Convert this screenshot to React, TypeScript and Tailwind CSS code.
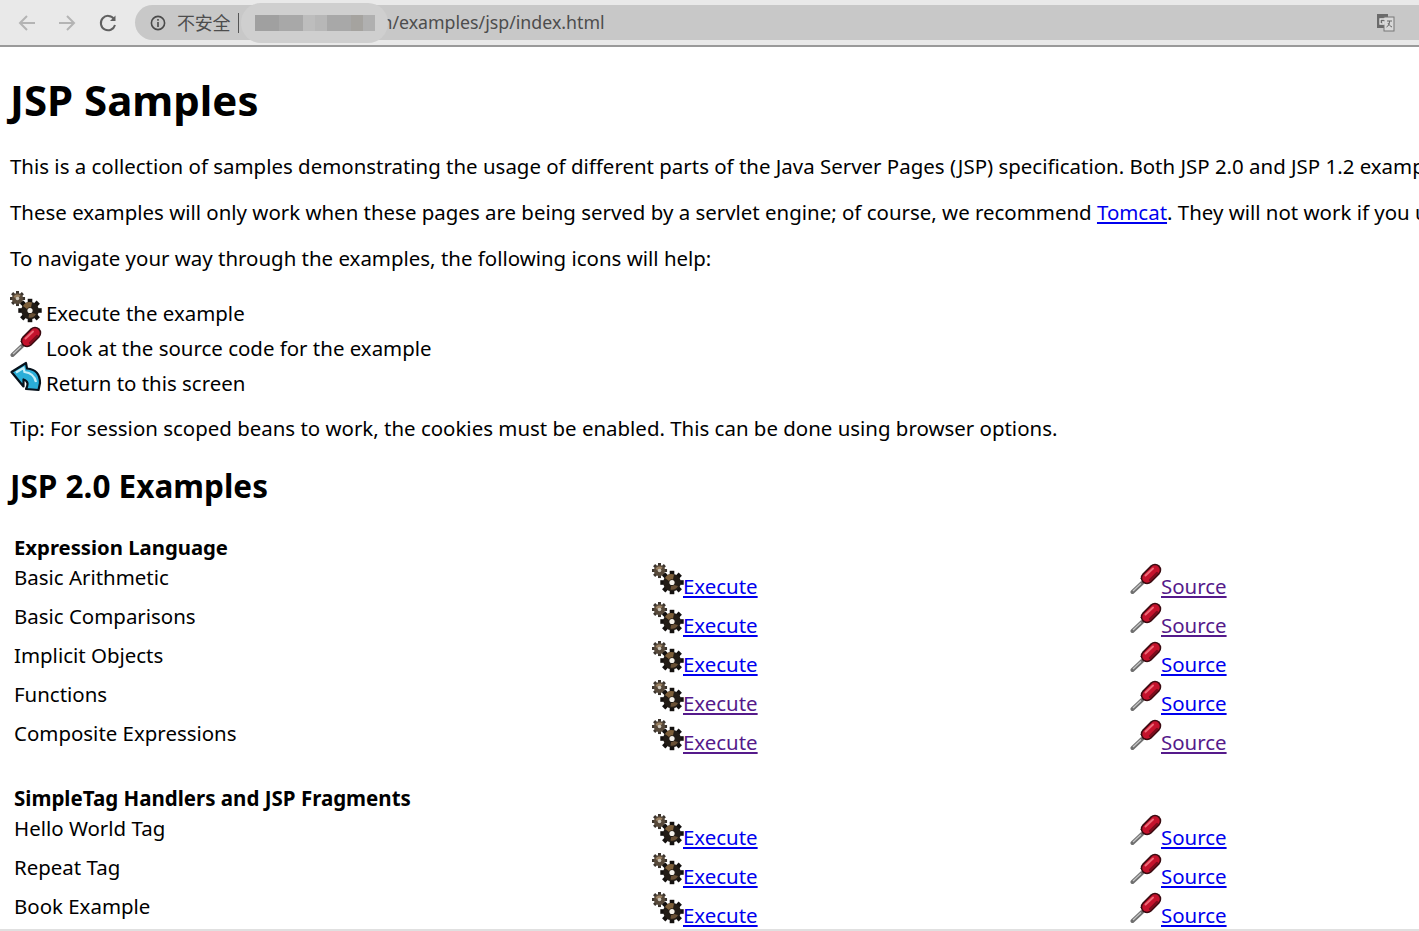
import React from "react";

const ff = { fontFamily: '"Noto Sans","Noto Sans CJK SC",sans-serif' };

function Gears({ className = "mr-[-1px]" }: { className?: string }) {
  const teeth = (cx: number, cy: number, r: number, n: number, c: string) =>
    Array.from({ length: n }).map((_, i) => {
      const a = (i * 360) / n;
      return <rect key={i} x={cx - r * 0.24} y={cy - r * 1.22} width={r * 0.48} height={r * 0.5} fill={c} transform={`rotate(${a} ${cx} ${cy})`} />;
    });
  return (
    <svg viewBox="0 0 32 32" className={`w-[32px] h-[32px] shrink-0 ${className}`}>
      {teeth(7.5, 7.5, 6.2, 8, "#3a332c")}
      <circle cx="7.5" cy="7.5" r="5.6" fill="#57493a" />
      <path d="M3.5 6a4.5 4.5 0 0 1 7-1.5l-2 2.5h-3z" fill="#9a8162" />
      <circle cx="7.5" cy="7.5" r="1.8" fill="#cfc8bb" />
      {teeth(20, 19.5, 9.6, 8, "#14110f")}
      <circle cx="20" cy="19.5" r="8.8" fill="#221c16" />
      <path d="M13 15a8 8 0 0 1 9-3.6l-1 5a3.4 3.4 0 0 0-4 1.5z" fill="#7d5f3a" />
      <path d="M26 23a7 7 0 0 1-7.5 3.6l.6-3.6a3.4 3.4 0 0 0 3-1z" fill="#6a5136" />
      <circle cx="20" cy="19.5" r="2.6" fill="#f5f2ec" />
    </svg>
  );
}

function Driver({ className = "mr-[-1px]" }: { className?: string }) {
  return (
    <svg viewBox="0 0 32 32" className={`w-[32px] h-[32px] shrink-0 ${className}`}>
      <path d="M2.5 29 L12 20" stroke="#6f6f6f" strokeWidth="4" strokeLinecap="round" />
      <path d="M3 28 L11 20.5" stroke="#c6c6c6" strokeWidth="1.2" />
      <path d="M11 15.5 L16 21 L19 18 L14 12.5 z" fill="#2a0c10" stroke="#2a0c10" />
      <path d="M17 15 L25 7" stroke="#3a0a10" strokeWidth="12.5" strokeLinecap="round" />
      <path d="M17 15 L25 7" stroke="#c4122c" strokeWidth="9.5" strokeLinecap="round" />
      <path d="M15.5 12.5 L23 5.5" stroke="#ee6a78" strokeWidth="2" strokeLinecap="round" />
      <path d="M20 17 L27 10" stroke="#7c0c1c" strokeWidth="2.4" strokeLinecap="round" />
    </svg>
  );
}

function Back({ className = "" }: { className?: string }) {
  return (
    <svg viewBox="0 0 32 32" className={`w-[32px] h-[32px] shrink-0 ${className}`}>
      <path d="M1.5 11 L16 2 L17 7.5 Q30 8.5 30 22 L28.5 29 L16 28 Q20 20.5 13.5 18.5 L13.5 25.5 z" fill="#2aaed8" stroke="#07121c" strokeWidth="2.2" strokeLinejoin="round" />
      <path d="M6 11.5 L13.5 7 L14.5 11 Q24 12 26 21" fill="none" stroke="#c4eef8" strokeWidth="2.2" />
    </svg>
  );
}

const BLUE = "text-[#0000ee]";
const PURPLE = "text-[#551a8b]";

function Row({ name, ex, src }: { name: string; ex: string; src: string }) {
  return (
    <div className="flex h-[39px] items-start">
      <div className="w-[642px] pl-[4px] text-black leading-[29px]">{name}</div>
      <div className="w-[478px] flex items-start">
        <Gears />
        <a href="#" className={`underline leading-[29px] mt-[9px] ${ex}`}>Execute</a>
      </div>
      <div className="flex items-start">
        <Driver />
        <a href="#" className={`underline leading-[29px] mt-[9px] ${src}`}>Source</a>
      </div>
    </div>
  );
}

export default function App() {
  return (
    <div className="w-[1419px] h-[931px] overflow-hidden bg-white relative flex flex-col text-[20.45px] text-black" style={ff}>
      <header className="h-[47px] shrink-0 bg-[#e9e9e9] border-b-[2px] border-[#9a9a9a] flex items-start pt-[5px] pl-[17px]">
        <svg viewBox="0 0 20 20" className="w-[20px] h-[20px] mt-[8px] text-[#b4b4b4]" fill="none" stroke="currentColor" strokeWidth="2"><path d="M18 10H3M10 3l-7 7 7 7" /></svg>
        <svg viewBox="0 0 20 20" className="w-[20px] h-[20px] mt-[8px] ml-[20px] text-[#b4b4b4]" fill="none" stroke="currentColor" strokeWidth="2"><path d="M2 10h15M10 3l7 7-7 7" /></svg>
        <svg viewBox="0 0 20 20" className="w-[20px] h-[20px] mt-[8px] ml-[21px] text-[#606060]" fill="none" stroke="currentColor" strokeWidth="2"><path d="M16 6a7.2 7.2 0 1 0 1 6" /><path d="M17.5 2.5v5.5h-5.5z" fill="currentColor" stroke="none" /></svg>
        <div className="ml-[17px] h-[35px] flex-1 mr-[-20px] rounded-l-[18px] bg-[#c8c8c8] flex items-center relative text-[17.75px] text-[#4d4d4d] pl-[15px]">
          <svg viewBox="0 0 16 16" className="w-[16px] h-[16px] shrink-0" fill="none" stroke="#4a4a4a" strokeWidth="1.6"><circle cx="8" cy="8" r="6.6" /><path d="M8 7v5M8 4v1.8" /></svg>
          <span className="ml-[11px] text-[18px] tracking-[-0.2px] leading-none">不安全</span>
          <span className="ml-[8px] w-[1px] h-[20px] bg-[#555]" />
          <span className="ml-[142px]">n/examples/jsp/index.html</span>
          <div className="absolute left-[106px] top-[-2px] w-[147px] h-[40px] rounded-[20px] bg-[#cfcfcf] flex items-center pl-[14px]">
            <div className="w-[24px] h-[16px] bg-[#a0a0a0]" /><div className="w-[24px] h-[16px] bg-[#a8a8a8]" /><div className="w-[12px] h-[16px] bg-[#bdbdbd]" /><div className="w-[12px] h-[16px] bg-[#b7b7b7]" /><div className="w-[24px] h-[16px] bg-[#a8a8a8]" /><div className="w-[12px] h-[16px] bg-[#a5a39f]" /><div className="w-[12px] h-[16px] bg-[#b0b0b0]" />
          </div>
          <svg viewBox="0 0 20 20" className="absolute left-[1241px] top-[8px] w-[20px] h-[20px]">
            <rect x="1" y="1" width="11" height="14" fill="#6a6a6a" />
            <rect x="8" y="4" width="10" height="14" fill="#d8d8d8" stroke="#777" />
            <path d="M9 6H4v5h4V9H6" fill="none" stroke="#e8e8e8" strokeWidth="1.3" />
            <path d="M11 8h5M13.5 8c0 3-1 5-3 6M12 10c1 2 2 3 4 4" fill="none" stroke="#666" strokeWidth="1" />
          </svg>
        </div>
      </header>
      <main className="pl-[10px] flex-1 min-h-0 overflow-hidden whitespace-nowrap">
        <h1 className="text-[42px] font-bold leading-[58px] mt-[24px]">JSP Samples</h1>
        <p className="mt-[23px] leading-[29px]">This is a collection of samples demonstrating the usage of different parts of the Java Server Pages (JSP) specification. Both JSP 2.0 and JSP 1.2 examples are presented below.</p>
        <p className="mt-[17px] leading-[29px]">These examples will only work when these pages are being served by a servlet engine; of course, we recommend <a href="#" className="underline text-[#0000ee]">Tomcat</a>. They will not work if you use Apache's mod_jk.</p>
        <p className="mt-[17px] leading-[29px]">To navigate your way through the examples, the following icons will help:</p>
        <div className="mt-[18px] flex flex-col">
          <div className="flex h-[35px] items-start"><Gears className="mr-[4px]" /><span className="mt-[8px] leading-[29px]">Execute the example</span></div>
          <div className="flex h-[35px] items-start"><Driver className="mr-[4px]" /><span className="mt-[8px] leading-[29px]">Look at the source code for the example</span></div>
          <div className="flex h-[35px] items-start"><Back className="mr-[4px]" /><span className="mt-[8px] leading-[29px]">Return to this screen</span></div>
        </div>
        <p className="mt-[18px] leading-[29px]">Tip: For session scoped beans to work, the cookies must be enabled. This can be done using browser options.</p>
        <h2 className="text-[31.5px] font-bold leading-[44px] mt-[21px]">JSP 2.0 Examples</h2>
        <div className="mt-[25px]">
          <div className="pl-[4px] font-bold leading-[29px] h-[30px] text-[20.3px]">Expression Language</div>
          <Row name="Basic Arithmetic" ex={BLUE} src={PURPLE} />
          <Row name="Basic Comparisons" ex={BLUE} src={PURPLE} />
          <Row name="Implicit Objects" ex={BLUE} src={BLUE} />
          <Row name="Functions" ex={PURPLE} src={BLUE} />
          <Row name="Composite Expressions" ex={PURPLE} src={PURPLE} />
          <div className="h-[26px]" />
          <div className="pl-[4px] font-bold leading-[29px] h-[30px] text-[20.5px]">SimpleTag Handlers and JSP Fragments</div>
          <Row name="Hello World Tag" ex={BLUE} src={BLUE} />
          <Row name="Repeat Tag" ex={BLUE} src={BLUE} />
          <Row name="Book Example" ex={BLUE} src={BLUE} />
        </div>
      </main>
      <div className="absolute left-0 right-0 bottom-0 h-[2px] bg-[#e0e0e0]" />
    </div>
  );
}
